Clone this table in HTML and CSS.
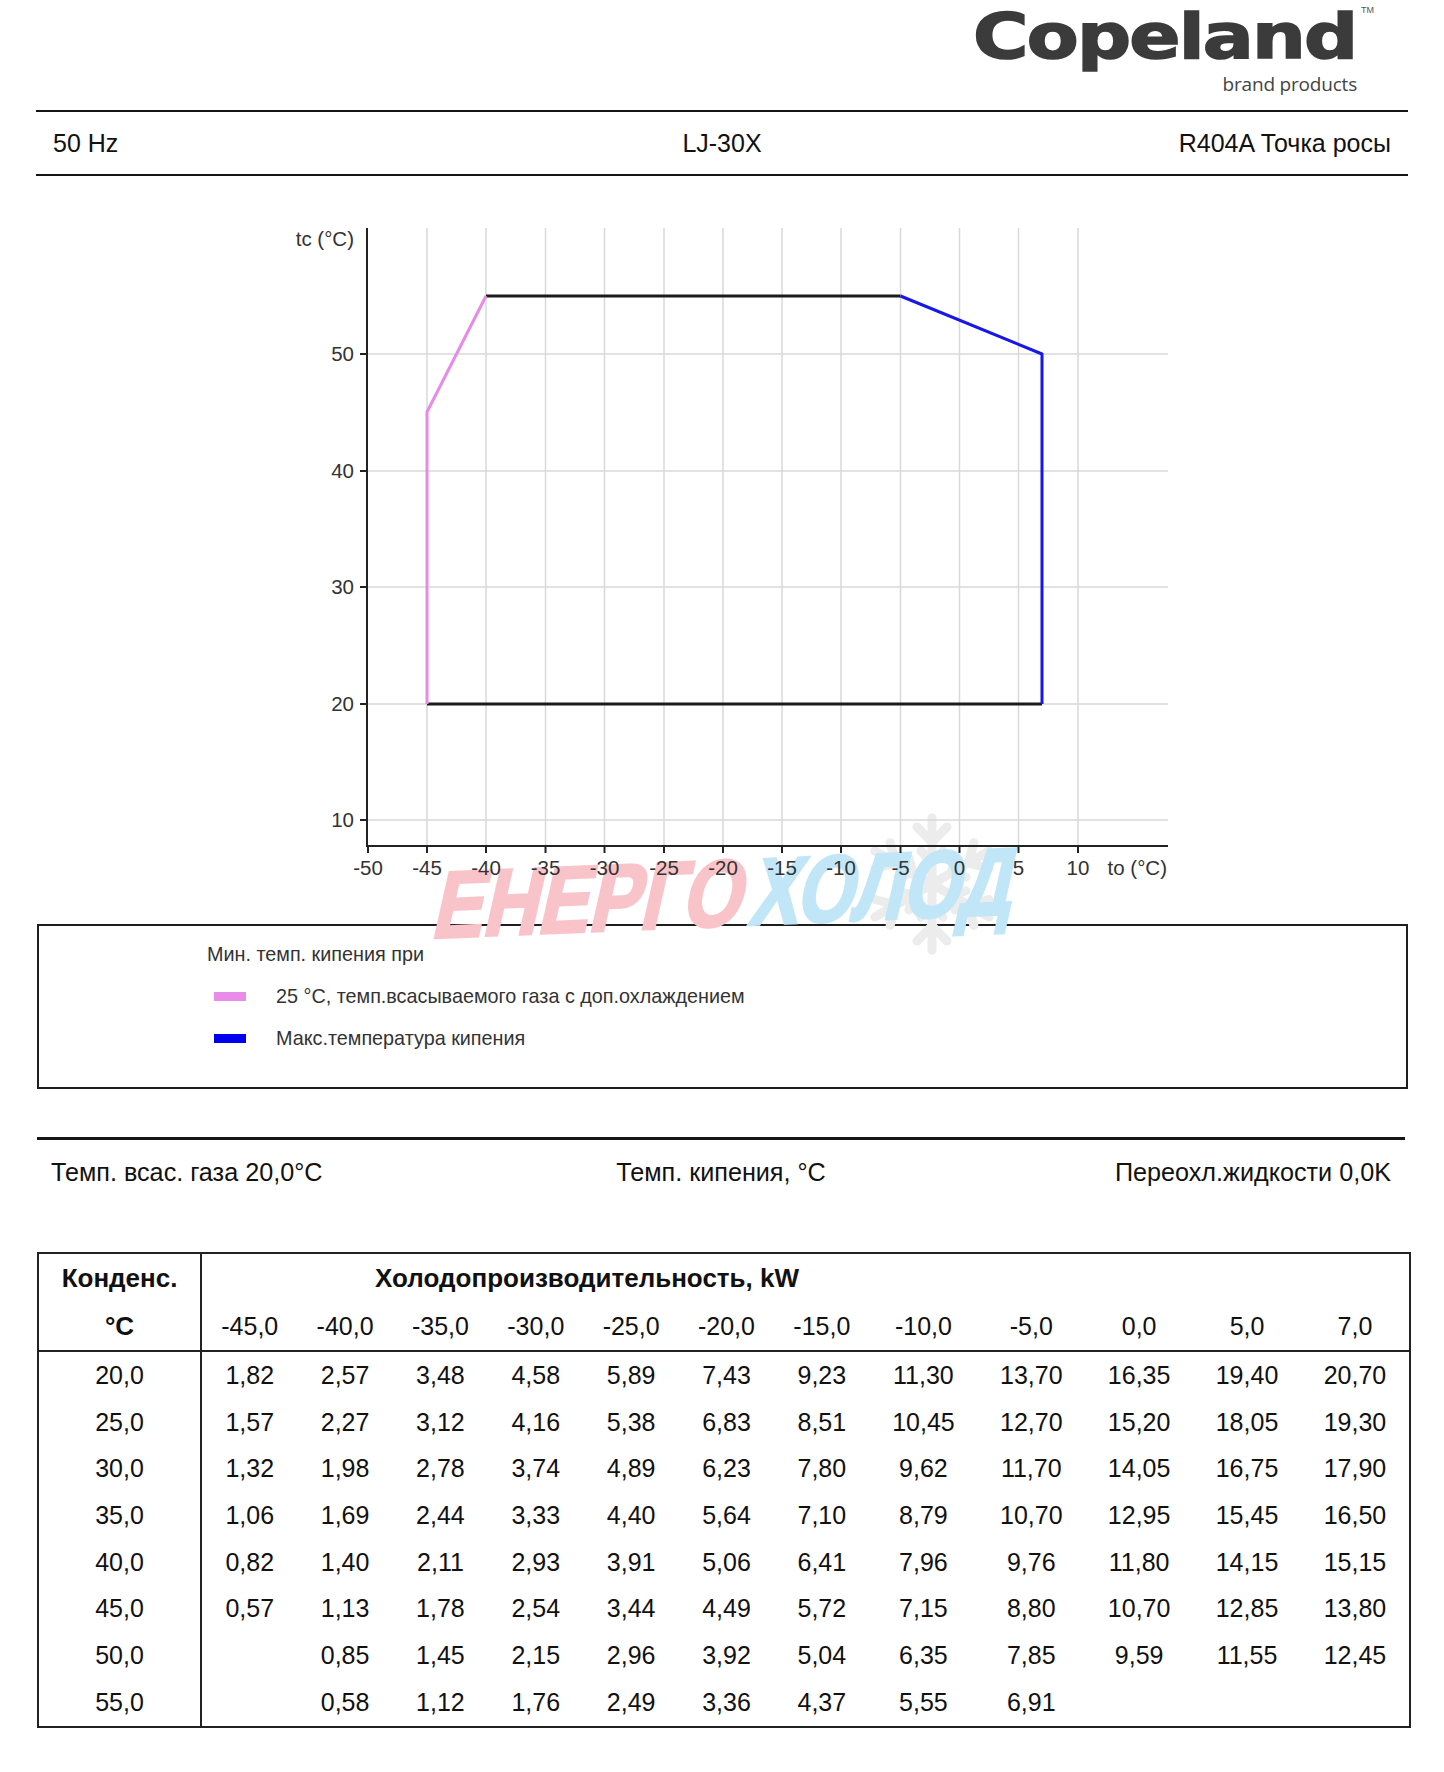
FILE: index.html
```html
<!DOCTYPE html>
<html lang="ru">
<head>
<meta charset="utf-8">
<title>LJ-30X</title>
<link rel="stylesheet" href="styles.css">
</head>
<body>
<div class="page">
  <div class="top">
    <div class="logo">
      <div class="logo-row"><span class="logo-word">Copeland</span><span class="tm">TM</span></div>
      <div class="logo-sub">brand products</div>
    </div>
  </div>

  <div class="head-row">
    <span class="hl">50 Hz</span>
    <span class="hc">LJ-30X</span>
    <span class="hr">R404A Точка росы</span>
  </div>

  <svg class="chart" width="1372" height="748" viewBox="36 176 1372 748">
    <g class="snow" transform="translate(932 884)">
      <g><line x1="0" y1="-66" x2="0" y2="66"/><line x1="0" y1="-42" x2="-15" y2="-57"/><line x1="0" y1="-42" x2="15" y2="-57"/><line x1="0" y1="42" x2="-15" y2="57"/><line x1="0" y1="42" x2="15" y2="57"/><line x1="0" y1="-22" x2="-11" y2="-33"/><line x1="0" y1="-22" x2="11" y2="-33"/><line x1="0" y1="22" x2="-11" y2="33"/><line x1="0" y1="22" x2="11" y2="33"/></g>
      <g transform="rotate(60)"><line x1="0" y1="-66" x2="0" y2="66"/><line x1="0" y1="-42" x2="-15" y2="-57"/><line x1="0" y1="-42" x2="15" y2="-57"/><line x1="0" y1="42" x2="-15" y2="57"/><line x1="0" y1="42" x2="15" y2="57"/><line x1="0" y1="-22" x2="-11" y2="-33"/><line x1="0" y1="-22" x2="11" y2="-33"/><line x1="0" y1="22" x2="-11" y2="33"/><line x1="0" y1="22" x2="11" y2="33"/></g>
      <g transform="rotate(120)"><line x1="0" y1="-66" x2="0" y2="66"/><line x1="0" y1="-42" x2="-15" y2="-57"/><line x1="0" y1="-42" x2="15" y2="-57"/><line x1="0" y1="42" x2="-15" y2="57"/><line x1="0" y1="42" x2="15" y2="57"/><line x1="0" y1="-22" x2="-11" y2="-33"/><line x1="0" y1="-22" x2="11" y2="-33"/><line x1="0" y1="22" x2="-11" y2="33"/><line x1="0" y1="22" x2="11" y2="33"/></g>
    </g>
    <g class="wm" transform="rotate(-2.4 430 938) translate(430 938) skewX(-15)">
      <text class="wm-a" x="0" y="0" textLength="310" lengthAdjust="spacingAndGlyphs">Енерго</text>
      <text class="wm-b" x="318" y="0" textLength="262" lengthAdjust="spacingAndGlyphs">Холод</text>
    </g>

    <g class="grid">
      <line x1="367" y1="820" x2="1168" y2="820"/>
      <line x1="367" y1="704" x2="1168" y2="704"/>
      <line x1="367" y1="587" x2="1168" y2="587"/>
      <line x1="367" y1="471" x2="1168" y2="471"/>
      <line x1="367" y1="354" x2="1168" y2="354"/>
      <line x1="427" y1="228" x2="427" y2="846"/>
      <line x1="486" y1="228" x2="486" y2="846"/>
      <line x1="545.5" y1="228" x2="545.5" y2="846"/>
      <line x1="604.5" y1="228" x2="604.5" y2="846"/>
      <line x1="664" y1="228" x2="664" y2="846"/>
      <line x1="723" y1="228" x2="723" y2="846"/>
      <line x1="782" y1="228" x2="782" y2="846"/>
      <line x1="841" y1="228" x2="841" y2="846"/>
      <line x1="900.5" y1="228" x2="900.5" y2="846"/>
      <line x1="959.5" y1="228" x2="959.5" y2="846"/>
      <line x1="1018.5" y1="228" x2="1018.5" y2="846"/>
      <line x1="1078" y1="228" x2="1078" y2="846"/>
    </g>

    <g class="axis">
      <line x1="367" y1="228" x2="367" y2="847"/>
      <line x1="366" y1="846" x2="1168" y2="846"/>
      <line x1="360" y1="820" x2="367" y2="820"/>
      <line x1="360" y1="704" x2="367" y2="704"/>
      <line x1="360" y1="587" x2="367" y2="587"/>
      <line x1="360" y1="471" x2="367" y2="471"/>
      <line x1="360" y1="354" x2="367" y2="354"/>
      <line x1="368" y1="846" x2="368" y2="853"/>
      <line x1="427" y1="846" x2="427" y2="853"/>
      <line x1="486" y1="846" x2="486" y2="853"/>
      <line x1="545.5" y1="846" x2="545.5" y2="853"/>
      <line x1="604.5" y1="846" x2="604.5" y2="853"/>
      <line x1="664" y1="846" x2="664" y2="853"/>
      <line x1="723" y1="846" x2="723" y2="853"/>
      <line x1="782" y1="846" x2="782" y2="853"/>
      <line x1="841" y1="846" x2="841" y2="853"/>
      <line x1="900.5" y1="846" x2="900.5" y2="853"/>
      <line x1="959.5" y1="846" x2="959.5" y2="853"/>
      <line x1="1018.5" y1="846" x2="1018.5" y2="853"/>
      <line x1="1078" y1="846" x2="1078" y2="853"/>
    </g>

    <g class="ylab">
      <text x="354" y="246">tc (°C)</text>
      <text x="354" y="361">50</text>
      <text x="354" y="478">40</text>
      <text x="354" y="594">30</text>
      <text x="354" y="711">20</text>
      <text x="354" y="827">10</text>
    </g>
    <g class="xlab">
      <text x="368" y="875">-50</text>
      <text x="427" y="875">-45</text>
      <text x="486" y="875">-40</text>
      <text x="545.5" y="875">-35</text>
      <text x="604.5" y="875">-30</text>
      <text x="664" y="875">-25</text>
      <text x="723" y="875">-20</text>
      <text x="782" y="875">-15</text>
      <text x="841" y="875">-10</text>
      <text x="900.5" y="875">-5</text>
      <text x="959.5" y="875">0</text>
      <text x="1018.5" y="875">5</text>
      <text x="1078" y="875">10</text>
    </g>
    <text class="xunit" x="1167" y="875">to (°C)</text>

    <polyline class="ln-black" points="486,296 900.5,296"/>
    <polyline class="ln-black" points="427,704 1042,704"/>
    <polyline class="ln-pink" points="427,704 427,412 486,296"/>
    <polyline class="ln-blue" points="900.5,296 1042,354 1042,704"/>
  </svg>

  <div class="legend">
    <div class="legend-title">Мин. темп. кипения при</div>
    <div class="legend-item"><span class="sw sw-pink"></span><span>25 °C, темп.всасываемого газа с доп.охлаждением</span></div>
    <div class="legend-item"><span class="sw sw-blue"></span><span>Макс.температура кипения</span></div>
  </div>

  <div class="cond-row">
    <span class="cl">Темп. всас. газа 20,0°C</span>
    <span class="cc">Темп. кипения, °C</span>
    <span class="cr">Переохл.жидкости 0,0K</span>
  </div>

  <table class="perf">
    <colgroup>
      <col class="c0">
      <col class="cn"><col class="cn"><col class="cn"><col class="cn"><col class="cn"><col class="cn"><col class="cn">
      <col class="cw"><col class="cw"><col class="cw"><col class="cw"><col class="cw">
    </colgroup>
    <thead>
      <tr class="h1">
        <th class="rh">Конденс.</th>
        <th class="title" colspan="12">Холодопроизводительность, kW</th>
      </tr>
      <tr class="h2">
        <th class="rh">°C</th>
        <td>-45,0</td><td>-40,0</td><td>-35,0</td><td>-30,0</td><td>-25,0</td><td>-20,0</td><td>-15,0</td><td>-10,0</td><td>-5,0</td><td>0,0</td><td>5,0</td><td>7,0</td>
      </tr>
    </thead>
    <tbody>
      <tr><td class="rh">20,0</td><td>1,82</td><td>2,57</td><td>3,48</td><td>4,58</td><td>5,89</td><td>7,43</td><td>9,23</td><td>11,30</td><td>13,70</td><td>16,35</td><td>19,40</td><td>20,70</td></tr>
      <tr><td class="rh">25,0</td><td>1,57</td><td>2,27</td><td>3,12</td><td>4,16</td><td>5,38</td><td>6,83</td><td>8,51</td><td>10,45</td><td>12,70</td><td>15,20</td><td>18,05</td><td>19,30</td></tr>
      <tr><td class="rh">30,0</td><td>1,32</td><td>1,98</td><td>2,78</td><td>3,74</td><td>4,89</td><td>6,23</td><td>7,80</td><td>9,62</td><td>11,70</td><td>14,05</td><td>16,75</td><td>17,90</td></tr>
      <tr><td class="rh">35,0</td><td>1,06</td><td>1,69</td><td>2,44</td><td>3,33</td><td>4,40</td><td>5,64</td><td>7,10</td><td>8,79</td><td>10,70</td><td>12,95</td><td>15,45</td><td>16,50</td></tr>
      <tr><td class="rh">40,0</td><td>0,82</td><td>1,40</td><td>2,11</td><td>2,93</td><td>3,91</td><td>5,06</td><td>6,41</td><td>7,96</td><td>9,76</td><td>11,80</td><td>14,15</td><td>15,15</td></tr>
      <tr><td class="rh">45,0</td><td>0,57</td><td>1,13</td><td>1,78</td><td>2,54</td><td>3,44</td><td>4,49</td><td>5,72</td><td>7,15</td><td>8,80</td><td>10,70</td><td>12,85</td><td>13,80</td></tr>
      <tr><td class="rh">50,0</td><td></td><td>0,85</td><td>1,45</td><td>2,15</td><td>2,96</td><td>3,92</td><td>5,04</td><td>6,35</td><td>7,85</td><td>9,59</td><td>11,55</td><td>12,45</td></tr>
      <tr><td class="rh">55,0</td><td></td><td>0,58</td><td>1,12</td><td>1,76</td><td>2,49</td><td>3,36</td><td>4,37</td><td>5,55</td><td>6,91</td><td></td><td></td><td></td></tr>
    </tbody>
  </table>
</div>
</body>
</html>
```

FILE: styles.css
```css
* { box-sizing: border-box; }

html, body {
  margin: 0;
  padding: 0;
  background: #ffffff;
}

body {
  font-family: "Liberation Sans", Arial, sans-serif;
  color: #111111;
}

.page {
  width: 1376px;
  margin-left: 36px;
}

/* ---------- logo ---------- */
.top {
  height: 110px;
  width: 1372px;
  display: flex;
  justify-content: flex-end;
}

.logo {
  margin-right: 34px;
  display: flex;
  flex-direction: column;
  align-items: flex-end;
}

.logo-row {
  display: flex;
  align-items: flex-start;
  height: 67px;
}

.logo-word {
  display: inline-block;
  margin-top: 5px;
  font-family: "DejaVu Sans", sans-serif;
  font-weight: 700;
  font-size: 63px;
  line-height: 63px;
  letter-spacing: -1.5px;
  color: #3b3b3b;
  -webkit-text-stroke: 1.6px #3b3b3b;
  transform: scaleX(1.2);
  transform-origin: right center;
}

.tm {
  margin-top: 5px;
  margin-left: 5px;
  font-family: "Liberation Sans", Arial, sans-serif;
  font-size: 9px;
  line-height: 10px;
  color: #555555;
}

.logo-sub {
  margin-top: 5px;
  margin-right: 17px;
  font-family: "Open Sans", "Liberation Sans", sans-serif;
  font-size: 19px;
  line-height: 24px;
  letter-spacing: -0.2px;
  color: #444444;
}

/* ---------- header rows ---------- */
.head-row {
  width: 1372px;
  height: 66px;
  border-top: 2px solid #151515;
  border-bottom: 2px solid #151515;
  display: grid;
  grid-template-columns: 1fr auto 1fr;
  align-items: center;
  padding: 0 17px 0 17px;
  font-size: 25px;
  color: #111111;
}

.hl { justify-self: start; }
.hc { justify-self: center; }
.hr { justify-self: end; }

/* ---------- chart ---------- */
.chart {
  display: block;
  overflow: visible;
}

.chart .grid line {
  stroke: #d9d9d9;
  stroke-width: 1.5;
}

.chart .axis line {
  stroke: #222222;
  stroke-width: 2;
}

.chart text {
  font-family: "Liberation Sans", Arial, sans-serif;
  font-size: 20.5px;
  fill: #333333;
}

.chart .ylab text { text-anchor: end; }
.chart .xlab text { text-anchor: middle; }
.chart .xunit { text-anchor: end; }

.chart polyline {
  fill: none;
  stroke-width: 3;
  stroke-linejoin: round;
}

.ln-black { stroke: #1c1c1c; }
.ln-pink { stroke: #e88be8; }
.ln-blue { stroke: #1717e8; }

.snow line {
  stroke: #ececec;
  stroke-width: 9;
  stroke-linecap: round;
}

.chart .wm text {
  font-family: "Liberation Sans", Arial, sans-serif;
  font-weight: 700;
  font-size: 94px;
  text-transform: uppercase;
  stroke-width: 3px;
  stroke-linejoin: miter;
}

.chart .wm-a { fill: #f9c4c9; stroke: #f9c4c9; }
.chart .wm-b { fill: #c1e6f8; stroke: #c1e6f8; }

/* ---------- legend ---------- */
.legend {
  width: 1371px;
  margin-left: 1px;
  height: 165px;
  border: 2px solid #1e1e1e;
  padding: 7px 0 0 168px;
  font-size: 19.8px;
  line-height: 42px;
  color: #333333;
}

.legend-item {
  display: flex;
  align-items: center;
  padding-left: 7px;
}

.sw {
  display: inline-block;
  width: 32px;
  height: 9px;
  margin-right: 30px;
}

.sw-pink { background: #e98be9; }
.sw-blue { background: #0000ee; }

/* ---------- condition row ---------- */
.cond-row {
  width: 1368px;
  margin-left: 1px;
  margin-top: 48px;
  border-top: 3px solid #151515;
  padding: 17px 14px 0 14px;
  display: grid;
  grid-template-columns: 1fr auto 1fr;
  font-size: 25.2px;
  line-height: 30px;
  color: #111111;
}

.cl { justify-self: start; }
.cc { justify-self: center; }
.cr { justify-self: end; }

/* ---------- table ---------- */
.perf {
  margin-top: 65px;
  margin-left: 1px;
  width: 1374px;
  table-layout: fixed;
  border-collapse: separate;
  border-spacing: 0;
  border: 2px solid #222222;
  font-family: "Liberation Sans", Arial, sans-serif;
  font-size: 25px;
  color: #111111;
}

.perf .c0 { width: 163px; }
.perf .cn { width: 95.3px; }
.perf .cw { width: 107.8px; }

.perf th,
.perf td {
  padding: 0;
  text-align: center;
  white-space: nowrap;
  font-weight: 400;
}

.perf th {
  font-weight: 700;
  font-size: 26px;
}

.perf .rh { border-right: 2px solid #222222; }

.perf .h1 { height: 49px; }
.perf .h2 { height: 49px; }

.perf .h2 th,
.perf .h2 td { border-bottom: 2px solid #222222; }

.perf .title {
  text-align: left;
  padding-left: 173px;
}

.perf tbody tr { height: 46.7px; }
```
